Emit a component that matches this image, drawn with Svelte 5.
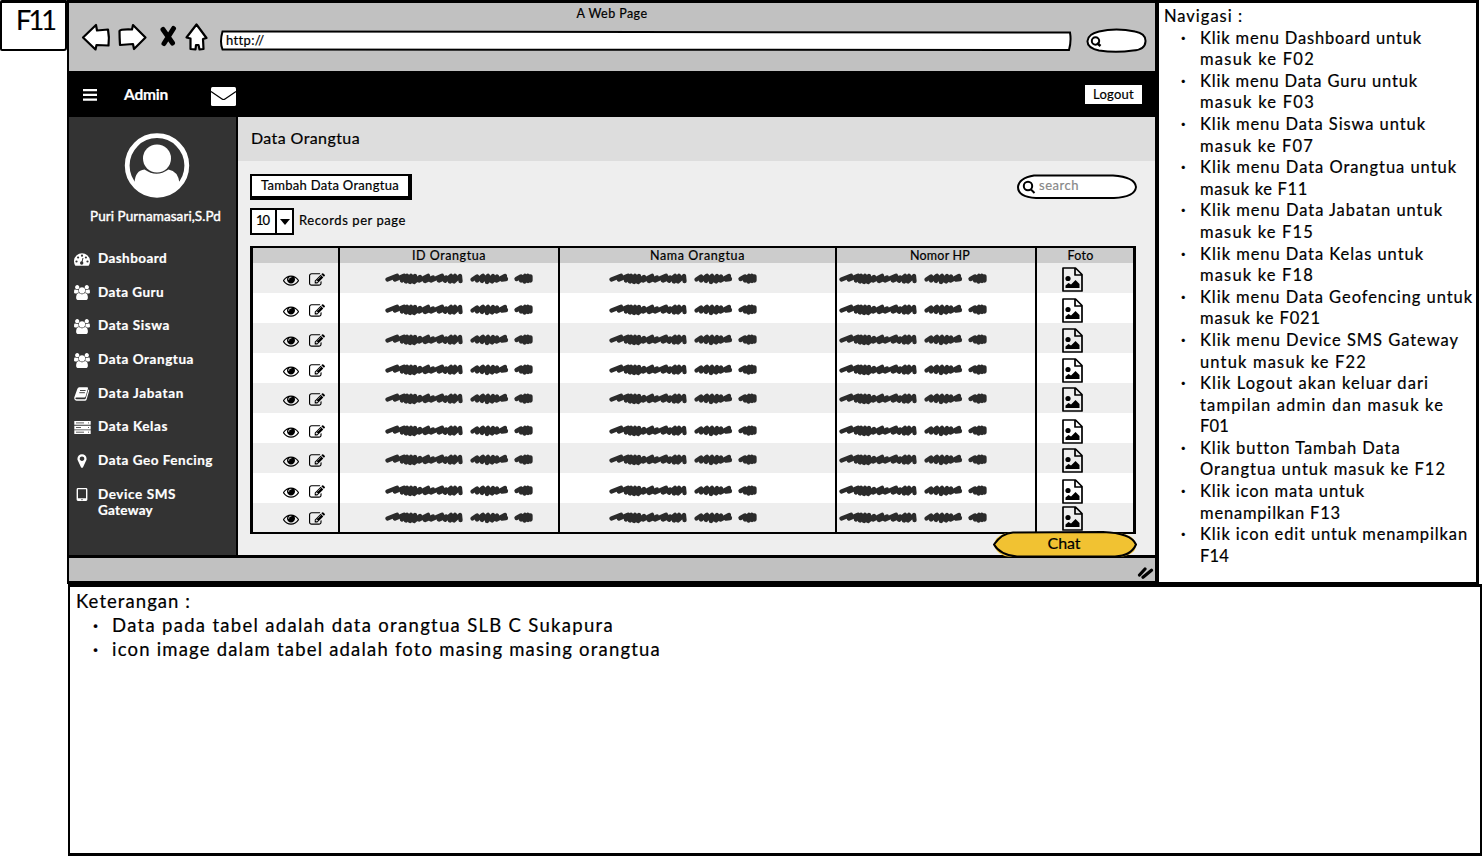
<script>
  const menu = [
    { icon: 'gauge', label: 'Dashboard', w: 69 },
    { icon: 'users', label: 'Data Guru', w: 66 },
    { icon: 'users', label: 'Data Siswa', w: 72 },
    { icon: 'users', label: 'Data Orangtua', w: 96 },
    { icon: 'book', label: 'Data Jabatan', w: 86 },
    { icon: 'server', label: 'Data Kelas', w: 70 },
    { icon: 'pin', label: 'Data Geo Fencing', w: 115 },
    { icon: 'tablet', label: 'Device SMS', w: 78, label2: 'Gateway', w2: 55 }
  ];

  const notes = [
    [['Klik menu Dashboard untuk', 222], ['masuk ke F02', 115]],
    [['Klik menu Data Guru untuk', 218], ['masuk ke F03', 115]],
    [['Klik menu Data Siswa untuk', 226], ['masuk ke F07', 114]],
    [['Klik menu Data Orangtua untuk', 257], ['masuk ke F11', 108]],
    [['Klik menu Data Jabatan untuk', 243], ['masuk ke F15', 114]],
    [['Klik menu Data Kelas untuk', 224], ['masuk ke F18', 114]],
    [['Klik menu Data Geofencing untuk', 273], ['masuk ke F021', 121]],
    [['Klik menu Device SMS Gateway', 259], ['untuk masuk ke F22', 167]],
    [['Klik Logout akan keluar dari', 229], ['tampilan admin dan masuk ke', 244], ['F01', 29]],
    [['Klik button Tambah Data', 200], ['Orangtua untuk masuk ke F12', 246]],
    [['Klik icon mata untuk', 165], ['menampilkan F13', 141]],
    [['Klik icon edit untuk menampilkan', 268], ['F14', 29]]
  ];

  const captions = [
    ['Data pada tabel adalah data orangtua SLB C Sukapura', 502],
    ['icon image dalam tabel adalah foto masing masing orangtua', 549]
  ];

  const shifts = [0, 0.5, 1, 1, 0, 2, 1, 2, -1];

  // Spreads a label over a given width by adjusting its letter spacing.
  function fit(node, width) {
    const natural = node.getBoundingClientRect().width;
    node.style.letterSpacing = (width - natural) / node.textContent.length + 'px';
  }
</script>

{#snippet scribble()}
  <svg class="scribble" width="150" height="13" viewBox="0 0 150 13">
    <path d="M2.500 7.500 12 3.800 10 7.500 19 3.800 17 8.500 22 3.800 21 9.500 26 3.800 25 10 30 4 29 10 35 5 34 8.500 43 3.800 40 9 48 5.500 46 8.500 57 3.800 54 8.500 61 5.500 60 8.800 66 3.800 65 9.500 70 3.800 69 9.500 75 4 75.500 9" />
    <path d="M87.500 7.500 92 4.500 92 8.500 98 3.800 97 9 103 3.800 102 10 108 4 107 9.500 112 4.500 111.500 8.500 120 4 117 7.500 121 7" />
    <path d="M131.500 7 136 4.500 136 8.500 140 3.800 139.500 9.500 143 3.800 143 9 145.500 4.500 145.500 8.500" />
  </svg>
{/snippet}

{#snippet icon(name)}
  {#if name === 'gauge'}
    <svg width="16" height="13" viewBox="0 0 16 13">
      <path fill="#fff" d="M1.400 12.800A8 8 0 1 1 14.600 12.800H1.400Z" />
      <g fill="#333"><circle cx="2.500" cy="8.500" r="1.100" /><circle cx="4.100" cy="4.500" r="1.100" /><circle cx="8" cy="2.700" r="1.100" /><circle cx="11.900" cy="4.500" r="1.100" /><circle cx="13.500" cy="8.500" r="1.100" /><circle cx="7.700" cy="10" r="1.700" /></g>
      <path stroke="#333" d="M7.700 10 9 5" />
    </svg>
  {:else if name === 'users'}
    <svg width="16" height="15" viewBox="0 0 1920 1792">
      <path fill="#fff" d="M593 896q-162 5-265 128h-134q-82 0-138-40.500t-56-118.500q0-353 124-353 6 0 43.500 21t97.500 42.500 119 21.500q67 0 133-23-5 37-5 66 0 139 81 256zm1071 637q0 120-73 189.500t-194 69.500h-874q-121 0-194-69.500t-73-189.500q0-53 3.500-103.500t14-109 26.500-108.500 43-97.500 62-81 85.500-53.500 111.500-20q10 0 43 21.500t73 48 107 48 135 21.500 135-21.500 107-48 73-48 43-21.500q61 0 111.500 20t85.500 53.500 62 81 43 97.500 26.500 108.500 14 109 3.500 103.500zm-1024-1277q0 106-75 181t-181 75-181-75-75-181 75-181 181-75 181 75 75 181zm704 384q0 159-112.500 271.500t-271.500 112.500-271.500-112.500-112.500-271.500 112.500-271.500 271.500-112.500 271.500 112.500 112.500 271.500zm576 225q0 78-56 118.500t-138 40.500h-134q-103-123-265-128 81-117 81-256 0-29-5-66 66 23 133 23 59 0 119-21.500t97.500-42.500 43.500-21q124 0 124 353zm-128-609q0 106-75 181t-181 75-181-75-75-181 75-181 181-75 181 75 75 181z" />
    </svg>
  {:else if name === 'book'}
    <svg width="16" height="14" viewBox="0 0 16 14">
      <path fill="#fff" d="M5.300.3H13q1.300 0 1 1.300l-2.400 8q-.3 1-1.400 1H2.300q-.9 0-.9.800t1.100.8h8.300q.7 0 .9-.6L14.400 2.500q1 .4.700 1.400l-2.500 8.500q-.4 1.300-1.700 1.300H2.500Q.4 13.700.2 11.300q0-.7.300-1.600L3.300 2Q3.900.3 5.300.3Z" />
      <path stroke="#333" stroke-width=".9" d="M6 3.500h5.600M5.300 5.700h5.600" />
    </svg>
  {:else if name === 'server'}
    <svg width="17" height="13" viewBox="0 0 17 13">
      <path fill="#fff" d="M.3 0h16.400v3.800H.3ZM.3 4.700h16.400v3.700H.3ZM.3 9.300h16.400v3.700H.3Z" />
      <path stroke="#333" stroke-width=".8" d="M2 1.900h8M2 6.500h5M2 11.200h8M14 1.900h1M14 6.500h1M14 11.200h1" />
    </svg>
  {:else if name === 'pin'}
    <svg width="16" height="16" viewBox="0 0 1792 1792">
      <path fill="#fff" d="M1152 640q0-106-75-181t-181-75-181 75-75 181 75 181 181 75 181-75 75-181zm256 0q0 109-33 179l-364 774q-16 33-47.500 52t-67.500 19-67.500-19-46.500-52l-365-774q-33-70-33-179 0-212 150-362t362-150 362 150 150 362z" />
    </svg>
  {:else}
    <svg width="16" height="13" viewBox="0 0 16 13">
      <path fill="#fff" fill-rule="evenodd" d="M4 0h8q1.400 0 1.400 1.400v10.200q0 1.400-1.400 1.400H4q-1.400 0-1.400-1.400V1.400Q2.600 0 4 0Zm0 1.200v9.100h8V1.200ZM8 11a.6.6 0 1 0 .01 0Z" />
    </svg>
  {/if}
{/snippet}

<div class="page">
  <div class="code"><span use:fit={38}>F11</span></div>

  <section class="browser">
    <header class="chrome">
      <div class="title"><span use:fit={71}>A Web Page</span></div>
      <div class="tools">
        <svg class="navicons" width="130" height="34" viewBox="0 0 130 34" fill="#fff" stroke="#000" stroke-width="2.200" stroke-linejoin="round">
          <path d="M3 17.500 16 5l1 5.500 11-1q1.500 8 .5 16l-12-.5-1 4.500Z" />
          <path d="M39.500 11q1-2 12.500-1.500L53 5l12.500 12.500L54 29l-1-5-13 1q-.5-8-.5-14Z" />
          <path d="m83 9.500 9.500 13.500m1-14.500-9.500 15" stroke-width="5" stroke-linecap="round" />
          <path d="M116.500 4.500 126.500 18l-3.500 1 .5 10-4 .5-1-4.500h-2.500l-.5 4.500-5-.5V18.500l-4-1Z" />
        </svg>
        <div class="url">
          <svg class="frame" width="852" height="22" viewBox="0 0 852 22" fill="#fff" stroke="#000" stroke-width="2">
            <path d="M2.500 1.500Q-.5 12 2.500 19.500L849 20q2.500-9 1-17.500Z" />
          </svg>
          <span use:fit={38}>http://</span>
        </div>
        <svg class="go" width="61" height="26" viewBox="0 0 61 26" fill="#fff" stroke="#000" stroke-width="2">
          <path d="M13 3.500Q30-.5 49 3.500q11 2 10.500 10Q59 22 47 22.500q-17 2.500-34 0Q1 20 1.500 13T13 3.500Z" />
          <circle cx="9.500" cy="13" r="3.700" /><path d="m11 15 3.500 3" stroke-width="2.500" />
        </svg>
      </div>
    </header>

    <div class="topbar">
      <svg class="burger" width="14" height="12" viewBox="0 0 14 12"><path fill="#fff" d="M0 0h14v2.300H0ZM0 4.700h14V7H0ZM0 9.500h14v2.300H0Z" /></svg>
      <b class="admin"><span use:fit={44}>Admin</span></b>
      <svg class="mail" width="25" height="19" viewBox="0 0 25 19">
        <rect width="25" height="19" rx="1.500" fill="#fff" /><path d="M0 4.500 11 12q1.500 1 3 0l11-7.500" fill="none" stroke="#000" stroke-width="1.200" />
      </svg>
      <button class="logout"><span use:fit={41}>Logout</span></button>
    </div>

    <div class="body">
      <aside>
        <svg class="avatar" width="66" height="65" viewBox="0 0 66 65">
          <circle cx="33" cy="32.500" r="29.800" fill="none" stroke="#fff" stroke-width="4.800" />
          <path fill="#fff" d="M10.500 50q.5-12.500 10-13.500 12 8.500 24 0Q54 38 55.500 50 46 62 33 62T10.500 50Z" />
          <circle cx="33" cy="25.500" r="14" fill="#fff" />
        </svg>
        <div class="user"><span use:fit={131}>Puri Purnamasari,S.Pd</span></div>
        <nav>
          {#each menu as item}
            <a class:double={item.label2}>
              <i>{@render icon(item.icon)}</i>
              <div>
                <span use:fit={item.w}>{item.label}</span>
                {#if item.label2}<br /><span use:fit={item.w2}>{item.label2}</span>{/if}
              </div>
            </a>
          {/each}
        </nav>
      </aside>

      <main>
        <h1><span use:fit={109}>Data Orangtua</span></h1>
        <div class="actions">
          <button class="add"><span use:fit={138}>Tambah Data Orangtua</span></button>
          <div class="search">
            <svg class="frame" width="120" height="25" viewBox="0 0 120 25" fill="#fff" stroke="#000" stroke-width="2">
              <path d="M17 1.500 96 1.500Q118 3 119 13q-1 10-22 11H19Q1 23 1 13 2 4 17 1.500Z" />
              <circle cx="11" cy="12" r="4.200" /><path d="m14 15.500 3.500 3.500" />
            </svg>
            <span use:fit={40}>search</span>
          </div>
        </div>
        <div class="pager">
          <div class="select">
            <div class="count"><span use:fit={13}>10</span></div>
            <div class="arrow"><svg width="10" height="6"><path d="M0 0h10L5 6Z" /></svg></div>
          </div>
          <span use:fit={107}>Records per page</span>
        </div>

        <div class="table">
          <div class="tr head">
            <div></div>
            <div><span use:fit={74}>ID Orangtua</span></div>
            <div><span use:fit={95}>Nama Orangtua</span></div>
            <div class="phone"><span use:fit={60}>Nomor HP</span></div>
            <div class="photo"><span use:fit={26}>Foto</span></div>
          </div>
          {#each shifts as shift}
            <div class="tr" style:--shift="{shift}px">
              <div class="ops">
                <svg width="16" height="16" viewBox="0 0 1792 1792"><path d="M1664 960q-152-236-381-353 61 104 61 225 0 185-131.500 316.500t-316.500 131.500-316.500-131.500-131.500-316.500q0-121 61-225-229 117-381 353 133 205 333.500 326.500t434.500 121.500 434.500-121.500 333.500-326.500zm-720-384q0-20-14-34t-34-14q-125 0-214.500 89.500t-89.500 214.500q0 20 14 34t34 14 34-14 14-34q0-86 61-147t147-61q20 0 34-14t14-34zm848 384q0 34-20 69-140 230-376.500 368.500t-499.500 138.500-499.500-139-376.500-368q-20-35-20-69t20-69q140-229 376.500-368t499.500-139 499.500 139 376.500 368q20 35 20 69z" /></svg>
                <svg width="16" height="16" viewBox="0 0 1792 1792"><path d="M888 1184l116-116-152-152-116 116v56h96v96h56zm440-720q-16-16-33 1l-350 350q-17 17-1 33t33-1l350-350q17-17 1-33zm80 594v190q0 119-84.500 203.500t-203.500 84.500h-832q-119 0-203.500-84.500t-84.500-203.500v-832q0-119 84.500-203.500t203.500-84.500h832q63 0 117 25 15 7 18 23 3 17-9 29l-49 49q-14 14-32 8-23-6-45-6h-832q-66 0-113 47t-47 113v832q0 66 47 113t113 47h832q66 0 113-47t47-113v-126q0-13 9-22l64-64q15-15 35-7t20 29zm-96-738l288 288-672 672h-288v-288zm444 132l-92 92-288-288 92-92q28-28 68-28t68 28l152 152q28 28 28 68t-28 68z" /></svg>
              </div>
              <div class="id">{@render scribble()}</div>
              <div class="name">{@render scribble()}</div>
              <div class="hp">{@render scribble()}</div>
              <div class="pic">
                <svg width="21" height="25" viewBox="0 0 21 25">
                  <path fill="none" stroke="#000" stroke-width="1.700" stroke-linejoin="round" d="M1 1h12.500L20 7.500V24H1ZM13 1v7h7" />
                  <circle cx="6" cy="11.500" r="2.600" /><path d="M3.500 21v-2.500L6.500 16l2.500 1.500 4.500-4.500 4 4V21Z" />
                </svg>
              </div>
            </div>
          {/each}
        </div>

        <button class="chat">
          <svg class="frame" width="144" height="27" viewBox="0 0 144 27">
            <path fill="#f1c232" d="M16 1.500Q2 4 1 14q3 11 17 12h108q17-2 17-12-1-10-17-12L100 1Z" />
            <path fill="none" stroke="#000" stroke-width="2" d="M1 13.500Q9 2 20 1.500L110 1q28 1 33 12.500Q138 25 122 25.500H24Q7 24 1 13.500Z" />
          </svg>
          <span use:fit={33}>Chat</span>
        </button>
      </main>
    </div>

    <footer>
      <svg width="17" height="13" viewBox="0 0 17 13"><path stroke="#000" stroke-width="3.200" stroke-linecap="round" d="m2.500 9 5.500-6M6 11.200l8.500-7" /></svg>
    </footer>
  </section>

  <section class="notes">
    <p><span use:fit={79}>Navigasi :</span></p>
    <ul>
      {#each notes as lines}
        <li>
          {#each lines as [text, width]}<div><span use:fit={width}>{text}</span></div>{/each}
        </li>
      {/each}
    </ul>
  </section>

  <section class="caption">
    <p><span use:fit={115}>Keterangan :</span></p>
    <ul>
      {#each captions as [text, width]}<li><div><span use:fit={width}>{text}</span></div></li>{/each}
    </ul>
  </section>
</div>

<style>
  :global(body) { background: #fff; overflow: hidden; }
  .page, .page * { box-sizing: border-box; }
  .page {
    width: 1482px; height: 856px; display: grid;
    grid-template-columns: 67px 1090px 322px 3px; grid-template-rows: 584px 272px;
    font-family: Lato, sans-serif; font-size: 13px; color: #000;
    -webkit-text-stroke: 0.2px;
  }
  span { white-space: pre; display: inline-block; }
  svg { display: block; flex: none; }
  button { font: inherit; color: inherit; padding: 0; border: 0; -webkit-text-stroke: inherit; }
  p, ul, h1 { margin: 0; padding: 0; }
  .frame { position: absolute; left: 0; top: 0; }

  .code { height: 51px; border: 2px solid #000; border-top-width: 3px; padding-left: 14px; font-size: 27px; line-height: 34px; border-radius: 2px 1px 3px 2px; }

  .browser { border: solid #000; border-width: 3px 2px 3px 2px; display: flex; flex-direction: column; }
  .chrome { height: 68px; background: #c1c1c1; }
  .title { height: 22px; line-height: 21px; text-align: center; font-size: 12.500px; }
  .tools { display: flex; padding-left: 11px; }
  .navicons { margin-top: -5px; }
  .url { position: relative; width: 852px; height: 22px; margin: 5px 0 0 10px; padding-left: 6px; line-height: 21px; font-size: 13px; }
  .url span { position: relative; }
  .go { margin: 3px 0 0 14px; }

  .topbar { height: 46px; background: #000; display: flex; align-items: center; padding: 0 13px 0 14px; color: #fff; }
  .burger { margin-top: 2px; }
  .admin { font-size: 15.500px; margin-left: 27px; }
  .mail { margin: 4px 0 0 43px; }
  .logout { margin-left: auto; width: 57px; height: 19px; background: #fff; color: #000; font-size: 13px; line-height: 18px; }

  .body { height: 441px; display: flex; border-bottom: 3px solid #000; }
  aside { width: 169px; background: #333; border-right: 2px solid #000; color: #fff; font-weight: 700; padding-top: 16px; }
  .avatar { margin: 0 auto 0 55px; }
  .user { margin: 9px 0 0 21px; height: 20px; line-height: 18px; font-size: 13.500px; font-weight: 400; -webkit-text-stroke: 0.4px; }
  nav { padding-top: 14.500px; }
  nav a { display: flex; align-items: center; height: 33.600px; padding-left: 5px; line-height: 16px; font-size: 13.500px; gap: 8px; }
  nav a.double { height: 49px; align-items: flex-start; padding-top: 9px; }
  nav i { width: 16px; display: block; padding-top: 2px; }
  nav a div { flex: 1; white-space: nowrap; }

  main { flex: 1; background: #eee; position: relative; min-width: 0; }
  h1 { background: #ddd; height: 44px; line-height: 41px; padding-left: 13px; font-size: 16px; font-weight: 400; }
  .actions { display: flex; justify-content: space-between; padding: 13px 18px 0 12px; height: 47px; }
  .add { width: 160px; height: 24px; background: #fff; border: 2px solid #000; box-shadow: 1px 1px 0 1px #000, 2px 2px 0 #000; font-size: 13px; line-height: 18px; padding-bottom: 2px; }
  .search { position: relative; width: 120px; height: 25px; padding-left: 22px; color: #888; line-height: 22px; font-size: 13px; }
  .search span { position: relative; }
  .pager { display: flex; gap: 5px; padding-left: 12px; height: 38px; line-height: 24px; font-size: 13px; }
  .select { display: flex; width: 44px; height: 27px; border: 2px solid #000; background: #fff; }
  .count { width: 25px; border-right: 2px solid #000; padding-left: 4px; line-height: 21px; }
  .arrow { flex: 1; display: flex; align-items: center; justify-content: center; }

  .table { margin-left: 12px; width: 886px; height: 288px; border: 3px solid #000; border-top-width: 2px; border-bottom-width: 2px; }
  .tr { display: grid; grid-template-columns: 87px 220px 277px 200px 1fr; height: 30px; }
  .tr > div { border-right: 2px solid #000; padding-top: calc(9px + var(--shift, 0px)); }
  .tr > div:last-child { border-right: 0; }
  .tr:nth-child(odd) { background: #fff; }
  .tr:nth-child(even) { background: #eee; }
  .tr.head { height: 15px; background: #ccc; font-size: 12.500px; line-height: 15px; text-align: center; }
  .tr.head > div { padding: 0; }
  .tr.head .phone { padding-left: 8px; }
  .tr.head .photo { padding-right: 9px; }
  .ops { display: flex; gap: 10px; padding-left: 30px; }
  .tr .id { padding-left: 45px; }
  .tr .name { padding-left: 49px; }
  .tr .hp { padding-left: 2px; }
  .tr .pic { padding-left: 25px; padding-top: calc(4px + var(--shift)); }
  .scribble { fill: none; stroke: #2b2b2b; stroke-width: 4.300; stroke-linecap: round; stroke-linejoin: round; }
  .tr:last-child { height: 29px; }

  .chat { position: absolute; left: 755px; top: 414px; width: 144px; height: 27px; background: none; font-size: 16px; line-height: 24px; text-align: center; padding-bottom: 4px; }
  .chat span { position: relative; left: -1px; }

  footer { flex: 1; background: #c1c1c1; display: flex; justify-content: flex-end; padding: 8px 1px 0 0; }

  .notes { border: solid #000; border-width: 3px 3px 2px 2px; padding: 3px 0 0 5px; font-size: 16.500px; line-height: 21.600px; }
  .notes li { list-style: none; padding-left: 36px; }
  .notes div, .notes p { height: 21.600px; }
  li::before { content: '·'; float: left; margin-left: -19px; font-weight: 700; }

  .caption { grid-column: 2 / 5; margin-left: 1px; border: 3px solid #000; border-right-width: 2px; border-left-width: 2px; padding: 2px 0 0 6px; font-size: 18.500px; line-height: 24px; }
  .caption li { list-style: none; padding-left: 36px; }
  .caption div, .caption p { height: 24px; }
</style>
